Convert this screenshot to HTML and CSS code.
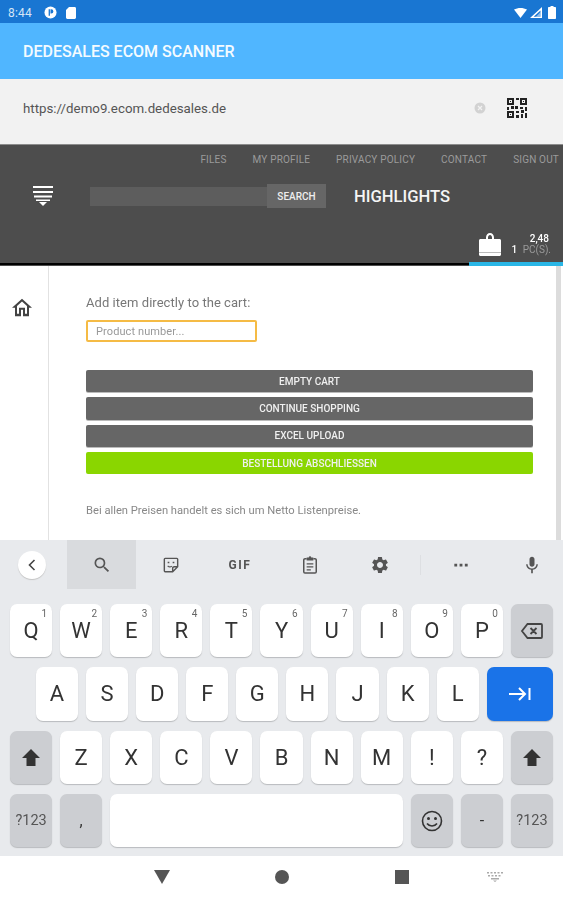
FILE: index.html
```html
<!DOCTYPE html>
<html lang="de">
<head>
<meta charset="utf-8">
<title>Dedesales Ecom Scanner</title>
<link rel="stylesheet" href="styles.css">
</head>
<body>
<div class="screen">
  <div class="status">
    <span class="clock">8:44</span>
    <svg class="st-p" viewBox="0 0 14 14"><circle cx="7" cy="7" r="6.5" fill="#fff"/><path d="M5 3.5h1.4v7H5z M7 3.5h.8a2.3 2.3 0 0 1 0 4.6H7z" fill="#1976d2"/></svg>
    <svg class="st-sd" viewBox="0 0 10 12"><path d="M3 0h5.6C9.4 0 10 .6 10 1.4v9.2c0 .8-.6 1.4-1.4 1.4H1.4C.6 12 0 11.4 0 10.6V3z" fill="#fff"/></svg>
    <span class="st-fill"></span>
    <svg class="st-wifi" viewBox="0 0 13 10"><path d="M0 1.6C3.6-.5 9.400-.5 13 1.600L6.500 10z" fill="#fff"/></svg>
    <svg class="st-sig" viewBox="0 0 12 11"><path d="M12 0v11H0z M10.500 3.600 3.600 9.800h6.900z" fill="#fff" fill-rule="evenodd"/><path d="M10.500 5v4.800H6z" fill="#fff" opacity=".5"/></svg>
    <svg class="st-bat" viewBox="0 0 8 13"><path d="M2.500 0h3v1H7c.6 0 1 .4 1 1v10c0 .6-.4 1-1 1H1c-.6 0-1-.4-1-1V2c0-.6.4-1 1-1h1.500z" fill="#fff"/></svg>
  </div>

  <div class="appbar">DEDESALES ECOM SCANNER</div>

  <div class="urlbar">
    <span class="url">https://demo9.ecom.dedesales.de</span>
    <svg class="clear" viewBox="0 0 12 12"><circle cx="6" cy="6" r="5.500" fill="#d2d2d2"/><path d="M4 4l4 4M8 4l-4 4" stroke="#f2f2f2" stroke-width="1.200"/></svg>
    <svg class="qr" viewBox="0 0 20 20" shape-rendering="crispEdges">
      <path fill="#222" d="M0 0h7v7H0z M9 0h3v2H9z M13 0h7v7h-7z M0 13h7v7H0z M8 8h3v3H8z M13 9h3v2h-3z M0 9h2v3H0z M4 8h3v3H4z M9 13h3v2H9z M14 12h3v3h-3z M18 9h2v4h-2z M9 17h3v3H9z M14 16h2v4h-2z M18 15h2v5h-2z"/>
      <path fill="#f2f2f2" d="M2 2h3v3H2z M15 2h3v3h-3z M2 15h3v3H2z"/>
      <path fill="#222" d="M3 3h1v1H3z M16 3h1v1h-1z M3 16h1v1H3z"/>
    </svg>
  </div>

  <header class="shop-head">
    <nav class="topnav">
      <a>FILES</a><a>MY PROFILE</a><a>PRIVACY POLICY</a><a>CONTACT</a><a>SIGN OUT</a>
    </nav>
    <div class="searchrow">
      <svg class="burger" viewBox="0 0 20 20"><path fill="#fff" d="M0 0h20v2H0z M0 5h20v2H0z M1 9.500h18v2H1z M3 13.500h14v1.500H3z M6 16h8l-4 4z"/></svg>
      <div class="searchbox"></div>
      <button class="searchbtn">SEARCH</button>
      <span class="highlights">HIGHLIGHTS</span>
    </div>
    <div class="cartrow">
      <svg class="bag" viewBox="0 0 22 23"><path fill="#fff" d="M7 6V4.500C7 2 8.800 0 11 0s4 2 4 4.500V6h5.500c.8 0 1.500.7 1.500 1.500V21.500c0 .8-.7 1.500-1.500 1.500H1.500C.7 23 0 22.300 0 21.500V7.500C0 6.700.7 6 1.500 6z M9 6h4V4.500C13 3.200 12.100 2 11 2S9 3.200 9 4.500z" fill-rule="evenodd"/><path fill="#bbb" d="M0 19h22v1H0z"/></svg>
      <div class="carttext">
        <div class="price">2,48</div>
        <div class="qty"><b>1</b> PC(S).</div>
      </div>
    </div>
    <div class="headline"><span class="hl-black"></span><span class="hl-blue"></span></div>
  </header>

  <main class="page">
    <aside class="side">
      <svg class="home" viewBox="2 3 20 17.500"><path fill="#444" d="M12 5.690l5 4.500V18h-2v-6H9v6H7v-7.810l5-4.500M12 3L2 12h3v8.500h6v-6.500h2v6.500h6V12h3L12 3z"/></svg>
    </aside>
    <section class="content">
      <label class="add-label">Add item directly to the cart:</label>
      <input class="prod-input" placeholder="Product number...">
      <div class="actions">
        <button class="act">EMPTY CART</button>
        <button class="act">CONTINUE SHOPPING</button>
        <button class="act">EXCEL UPLOAD</button>
        <button class="act act-go">BESTELLUNG ABSCHLIESSEN</button>
      </div>
      <p class="note">Bei allen Preisen handelt es sich um Netto Listenpreise.</p>
    </section>
    <div class="scroll"></div>
  </main>

  <section class="keyboard">
    <div class="kb-tools">
      <span class="tool tool-back"><span class="backdisc"><svg viewBox="0 0 10 14"><path d="M7.500 2 2.500 7l5 5" fill="none" stroke="#444" stroke-width="1.600"/></svg></span></span>
      <span class="tool tool-active"><svg class="ti" viewBox="0 0 24 24"><path fill="#555" d="M15.500 14h-.79l-.28-.27A6.471 6.471 0 0 0 16 9.500 6.500 6.500 0 1 0 9.500 16c1.610 0 3.090-.59 4.230-1.570l.27.28v.79l5 4.990L20.490 19l-4.990-5zm-6 0C7.010 14 5 11.990 5 9.500S7.010 5 9.500 5 14 7.010 14 9.500 11.990 14 9.500 14z"/></svg></span>
      <span class="tool"><svg class="ti" viewBox="0 0 24 24"><path fill="none" stroke="#555" stroke-width="1.700" d="M5 4h14c.6 0 1 .4 1 1v9l-6 6H5c-.6 0-1-.4-1-1V5c0-.6.4-1 1-1z M20 14h-4c-1.200 0-2 .8-2 2v4"/><path fill="#555" d="M8 8h2v2H8z M14 8h2v2h-2z"/><path fill="none" stroke="#555" stroke-width="1.500" d="M8 13c1.500 1.500 3.500 1.500 5 .5"/></svg></span>
      <span class="tool gif">GIF</span>
      <span class="tool"><svg class="ti" viewBox="0 0 24 24"><path fill="none" stroke="#555" stroke-width="1.800" d="M8 4.500H6c-.8 0-1.500.7-1.500 1.500v14c0 .8.7 1.500 1.500 1.500h12c.8 0 1.500-.7 1.500-1.500V6c0-.8-.7-1.500-1.500-1.500h-2"/><path fill="#555" d="M8 3h2.500a1.500 1.500 0 0 1 3 0H16v3.500H8z M8 10h8v1.500H8z M8 13.500h8V15H8z M8 17h5v1.500H8z"/></svg></span>
      <span class="tool"><svg class="ti" viewBox="0 0 24 24"><path fill="#555" d="M19.140 12.940c.04-.3.060-.61.060-.94 0-.32-.02-.64-.07-.94l2.030-1.580a.49.49 0 0 0 .12-.61l-1.920-3.320a.488.488 0 0 0-.59-.22l-2.390.96c-.5-.38-1.030-.7-1.620-.94l-.36-2.540a.484.484 0 0 0-.48-.41h-3.840c-.24 0-.43.17-.47.41l-.36 2.540c-.59.24-1.130.57-1.620.94l-2.390-.96c-.22-.08-.47 0-.59.22L2.740 8.870c-.12.21-.08.47.12.61l2.030 1.580c-.05.3-.09.63-.09.94s.02.64.07.94l-2.030 1.580a.49.49 0 0 0-.12.61l1.920 3.320c.12.22.37.29.59.22l2.390-.96c.5.38 1.030.7 1.620.94l.36 2.540c.05.24.24.41.48.41h3.840c.24 0 .44-.17.47-.41l.36-2.540c.59-.24 1.130-.56 1.620-.94l2.390.96c.22.08.47 0 .59-.22l1.920-3.320c.12-.22.07-.47-.12-.61l-2.010-1.580zM12 15.600c-1.980 0-3.600-1.620-3.600-3.600s1.620-3.600 3.600-3.600 3.600 1.620 3.600 3.600-1.620 3.600-3.600 3.600z"/></svg></span>
      <span class="tool-div"></span>
      <span class="tool"><svg class="ti" viewBox="0 0 24 24"><path fill="#555" d="M4 10.500h3.400v3.400H4z M10.300 10.500h3.400v3.400h-3.400z M16.600 10.500H20v3.400h-3.400z"/></svg></span>
      <span class="tool"><svg class="ti" viewBox="0 0 24 24"><path fill="#555" d="M12 14c1.660 0 3-1.340 3-3V5c0-1.660-1.340-3-3-3S9 3.340 9 5v6c0 1.660 1.340 3 3 3zm5.300-3c0 3-2.540 5.100-5.300 5.100S6.700 14 6.700 11H5c0 3.410 2.720 6.230 6 6.720V22h2v-4.280c3.280-.48 6-3.300 6-6.720h-1.700z"/></svg></span>
    </div>

    <div class="kb-rows">
      <div class="kb-row grid11">
        <span class="key"><i>1</i>Q</span><span class="key"><i>2</i>W</span><span class="key"><i>3</i>E</span><span class="key"><i>4</i>R</span><span class="key"><i>5</i>T</span><span class="key"><i>6</i>Y</span><span class="key"><i>7</i>U</span><span class="key"><i>8</i>I</span><span class="key"><i>9</i>O</span><span class="key"><i>0</i>P</span>
        <span class="key fn"><svg class="ki" viewBox="0 0 24 24"><path fill="none" stroke="#444" stroke-width="1.800" d="M7.500 5H21c.6 0 1 .4 1 1v12c0 .6-.4 1-1 1H7.500L2 12z M10.500 9l6 6M16.500 9l-6 6"/></svg></span>
      </div>
      <div class="kb-row row2">
        <span class="key">A</span><span class="key">S</span><span class="key">D</span><span class="key">F</span><span class="key">G</span><span class="key">H</span><span class="key">J</span><span class="key">K</span><span class="key">L</span>
        <span class="key enter"><svg class="ki" viewBox="0 0 24 24"><path fill="none" stroke="#fff" stroke-width="2" d="M1 12h16M11 6l6 6-6 6M21.500 6v12"/></svg></span>
      </div>
      <div class="kb-row grid11">
        <span class="key fn"><svg class="ks" viewBox="0 0 18 17"><path fill="#333" d="M9 0l9 9h-4.500v8h-9V9H0z"/></svg></span>
        <span class="key">Z</span><span class="key">X</span><span class="key">C</span><span class="key">V</span><span class="key">B</span><span class="key">N</span><span class="key">M</span><span class="key">!</span><span class="key">?</span>
        <span class="key fn"><svg class="ks" viewBox="0 0 18 17"><path fill="#333" d="M9 0l9 9h-4.500v8h-9V9H0z"/></svg></span>
      </div>
      <div class="kb-row grid11">
        <span class="key fn sym">?123</span>
        <span class="key fn">,</span>
        <span class="key space"></span>
        <span class="key fn"><svg class="ke" viewBox="0 0 24 24"><circle cx="12" cy="12" r="9.500" fill="none" stroke="#333" stroke-width="1.600"/><circle cx="8.500" cy="9.500" r="1.500" fill="#333"/><circle cx="15.500" cy="9.500" r="1.500" fill="#333"/><path d="M7 14.500c2.500 3.300 7.500 3.300 10 0" fill="none" stroke="#333" stroke-width="1.600"/></svg></span>
        <span class="key fn">-</span>
        <span class="key fn sym">?123</span>
      </div>
    </div>
  </section>

  <footer class="navbar">
    <svg class="nb n-back" viewBox="0 0 16 14"><path fill="#555" d="M0 0h16L8 14z"/></svg>
    <svg class="nb n-home" viewBox="0 0 14 14"><circle cx="7" cy="7" r="7" fill="#555"/></svg>
    <svg class="nb n-rec" viewBox="0 0 14 14"><path fill="#555" d="M0 0h14v14H0z"/></svg>
    <svg class="nb n-kb" viewBox="0 0 16 10"><path fill="#aaa" d="M0 0h2v1.500H0z M3.500 0h2v1.500h-2z M7 0h2v1.500H7z M10.500 0h2v1.500h-2z M14 0h2v1.500h-2z M1 3h2v1.500H1z M4.500 3h2v1.500h-2z M8 3h2v1.500H8z M11.500 3h2v1.500h-2z M4 6h8v1.500H4z M6 8.500h4L8 10z"/></svg>
  </footer>
</div>
</body>
</html>
```

FILE: styles.css
```css
* { box-sizing: border-box; }

html, body {
  margin: 0;
  padding: 0;
  background: #fff;
}

body {
  font-family: Roboto, "Liberation Sans", sans-serif;
}

.screen {
  width: 563px;
  height: 900px;
  overflow: hidden;
  display: flex;
  flex-direction: column;
  filter: blur(.4px);
}

/* status bar */
.status {
  height: 23px;
  background: #1976d2;
  display: flex;
  align-items: center;
  padding: 2px 7px 0 8px;
  flex: none;
}

.clock {
  color: #d5e5f6;
  font-size: 12px;
  width: 36px;
  letter-spacing: .2px;
}

.st-p { width: 13px; height: 13px; margin-right: 9px; }
.st-sd { width: 10px; height: 12px; }
.st-fill { flex: 1; }
.st-wifi { width: 13px; height: 10px; margin-right: 3px; }
.st-sig { width: 12px; height: 11px; margin-right: 6px; }
.st-bat { width: 8px; height: 13px; }

/* app bar */
.appbar {
  height: 56px;
  flex: none;
  background: #50b6ff;
  color: #f4fbff;
  font-size: 16px;
  font-weight: 500;
  padding-left: 23px;
  display: flex;
  align-items: center;
}

/* url bar */
.urlbar {
  height: 65px;
  flex: none;
  background: #f2f2f2;
  display: flex;
  align-items: center;
  padding: 0 36px 7px 23px;
}

.url {
  flex: 1;
  font-size: 13.300px;
  color: #555;
}

.clear { width: 12px; height: 12px; margin-right: 21px; }
.qr { width: 20px; height: 20px; }

/* shop header */
.shop-head {
  height: 122px;
  flex: none;
  background: #4d4d4d;
  border-top: 1px solid #8c8c8c;
  display: flex;
  flex-direction: column;
}

.topnav {
  display: flex;
  justify-content: flex-end;
  gap: 26px;
  padding: 8px 4px 0 0;
  height: 27px;
  font-size: 10px;
  line-height: 13px;
  color: #9b9b9b;
  letter-spacing: .18px;
}

.searchrow {
  display: flex;
  align-items: center;
  height: 24px;
  margin-top: 12px;
  padding-left: 33px;
}

.burger { width: 20px; height: 20px; margin-right: 37px; }

.searchbox {
  width: 177px;
  height: 19px;
  margin-top: 1px;
  background: #5d5d5d;
}

.searchbtn {
  width: 59px;
  height: 24px;
  border: 0;
  padding: 0;
  background: #666;
  color: #eee;
  font: 500 10px Roboto, "Liberation Sans", sans-serif;
  margin-right: 28px;
}

.highlights {
  color: #f5f5f5;
  font-size: 16.600px;
  font-weight: 500;
}

.cartrow {
  flex: 1;
  display: flex;
  justify-content: flex-end;
  align-items: flex-end;
  padding-right: 12px;
}

.bag { width: 22px; height: 23px; margin: 0 11px 6px 0; }

.carttext {
  text-align: right;
  margin-bottom: 7px;
  font-size: 10px;
  line-height: 11px;
  color: #9b9b9b;
}

.price { color: #fff; font-weight: 500; margin-right: 2px; }
.qty b { color: #fff; font-weight: 500; margin-right: 3px; }

.headline {
  height: 4px;
  flex: none;
  display: flex;
  align-items: center;
}

.hl-black { flex: 1; height: 2px; background: #000; }
.hl-blue { width: 94px; height: 4px; background: #29b6e6; }

/* main page */
.page {
  height: 274px;
  flex: none;
  background: #fff;
  display: flex;
  position: relative;
  overflow: hidden;
}

.side {
  width: 49px;
  flex: none;
  border-right: 1px solid #e2e2e2;
  padding: 31px 0 0 12px;
}

.home { width: 20px; height: 21px; display: block; }

.content {
  flex: 1;
  padding: 29px 30px 0 37px;
  display: flex;
  flex-direction: column;
  align-items: flex-start;
}

.add-label {
  font-size: 13px;
  line-height: 15px;
  color: #777;
  letter-spacing: .05px;
}

.prod-input {
  width: 171px;
  height: 22px;
  margin-top: 10px;
  border: 2px solid #f5bb45;
  border-radius: 2px;
  padding: 0 8px;
  font: 11px Roboto, "Liberation Sans", sans-serif;
  letter-spacing: .1px;
  outline: none;
  background: #fff;
}

.prod-input::placeholder { color: #999; opacity: 1; }

.actions {
  align-self: stretch;
  margin-top: 28px;
  display: flex;
  flex-direction: column;
  gap: 5px;
}

.act {
  height: 22.300px;
  border: 0;
  border-radius: 2px;
  padding: 0;
  background: #666;
  color: #f0f0f0;
  font: 500 10px Roboto, "Liberation Sans", sans-serif;
  box-shadow: 0 1px 0 #bbb;
}

.act-go { background: #8ad600; box-shadow: none; }

.note {
  margin: 30px 0 0;
  font-size: 11.200px;
  line-height: 14px;
  color: #888;
}

.scroll {
  position: absolute;
  top: 0;
  bottom: 0;
  right: 2px;
  width: 5px;
  background: #dcdcdc;
}

/* keyboard */
.keyboard {
  height: 316px;
  flex: none;
  background: #e8eaed;
  display: flex;
  flex-direction: column;
}

.kb-tools {
  height: 49px;
  flex: none;
  margin-bottom: 15px;
  display: grid;
  grid-template-columns: 67px 69px 70px 68px 72px 68px 7px 80px 1fr;
}

.tool {
  display: flex;
  align-items: center;
  justify-content: center;
}

.tool-back { justify-content: flex-start; padding-left: 18px; }

.tool-active { background: #d9dbde; }

.backdisc {
  width: 28px;
  height: 28px;
  border-radius: 50%;
  background: #fff;
  box-shadow: 0 1px 1px #c4c4c4;
  display: flex;
  align-items: center;
  justify-content: center;
}

.backdisc svg { width: 10px; height: 14px; }

.ti { width: 20px; height: 20px; }

.gif {
  font-size: 12px;
  font-weight: 700;
  color: #555;
  letter-spacing: 1.500px;
}

.tool-div {
  width: 1px;
  height: 20px;
  background: #dddfe2;
  align-self: center;
  justify-self: end;
}

.kb-rows {
  display: flex;
  flex-direction: column;
  gap: 10px;
  padding: 0 10px;
}

.kb-row { height: 53.330px; }

.grid11 {
  display: grid;
  grid-template-columns: repeat(11, 1fr);
  column-gap: 8px;
}

.row2 {
  display: grid;
  grid-template-columns: repeat(9, 42.090px) 1fr;
  column-gap: 8px;
  padding-left: 26px;
}

.key {
  position: relative;
  background: #fff;
  border-radius: 7px;
  box-shadow: 0 1px 1px #b9bbbe;
  display: flex;
  align-items: center;
  justify-content: center;
  font-size: 22px;
  color: #333;
}

.key i {
  position: absolute;
  top: 4px;
  right: 5px;
  font-style: normal;
  font-size: 10px;
  line-height: 12px;
  color: #666;
}

.fn { background: #ccced2; font-size: 16px; }
.sym { font-size: 14.500px; color: #555; }
.enter { background: #1a73e8; }
.space { grid-column: span 6; }

.ki { width: 24px; height: 24px; }
.ks { width: 18px; height: 17px; }
.ke { width: 24px; height: 24px; }

/* system navigation */
.navbar {
  height: 44px;
  flex: none;
  background: #fff;
  display: grid;
  grid-template-columns: 154px 16px 105px 14px 106px 14px 78px 16px;
  align-items: center;
  padding-bottom: 2px;
}

.nb { grid-row: 1; }
.n-back { grid-column: 2; width: 16px; height: 14px; }
.n-home { grid-column: 4; width: 14px; height: 14px; }
.n-rec { grid-column: 6; width: 14px; height: 14px; }
.n-kb { grid-column: 8; width: 16px; height: 10px; }
```
